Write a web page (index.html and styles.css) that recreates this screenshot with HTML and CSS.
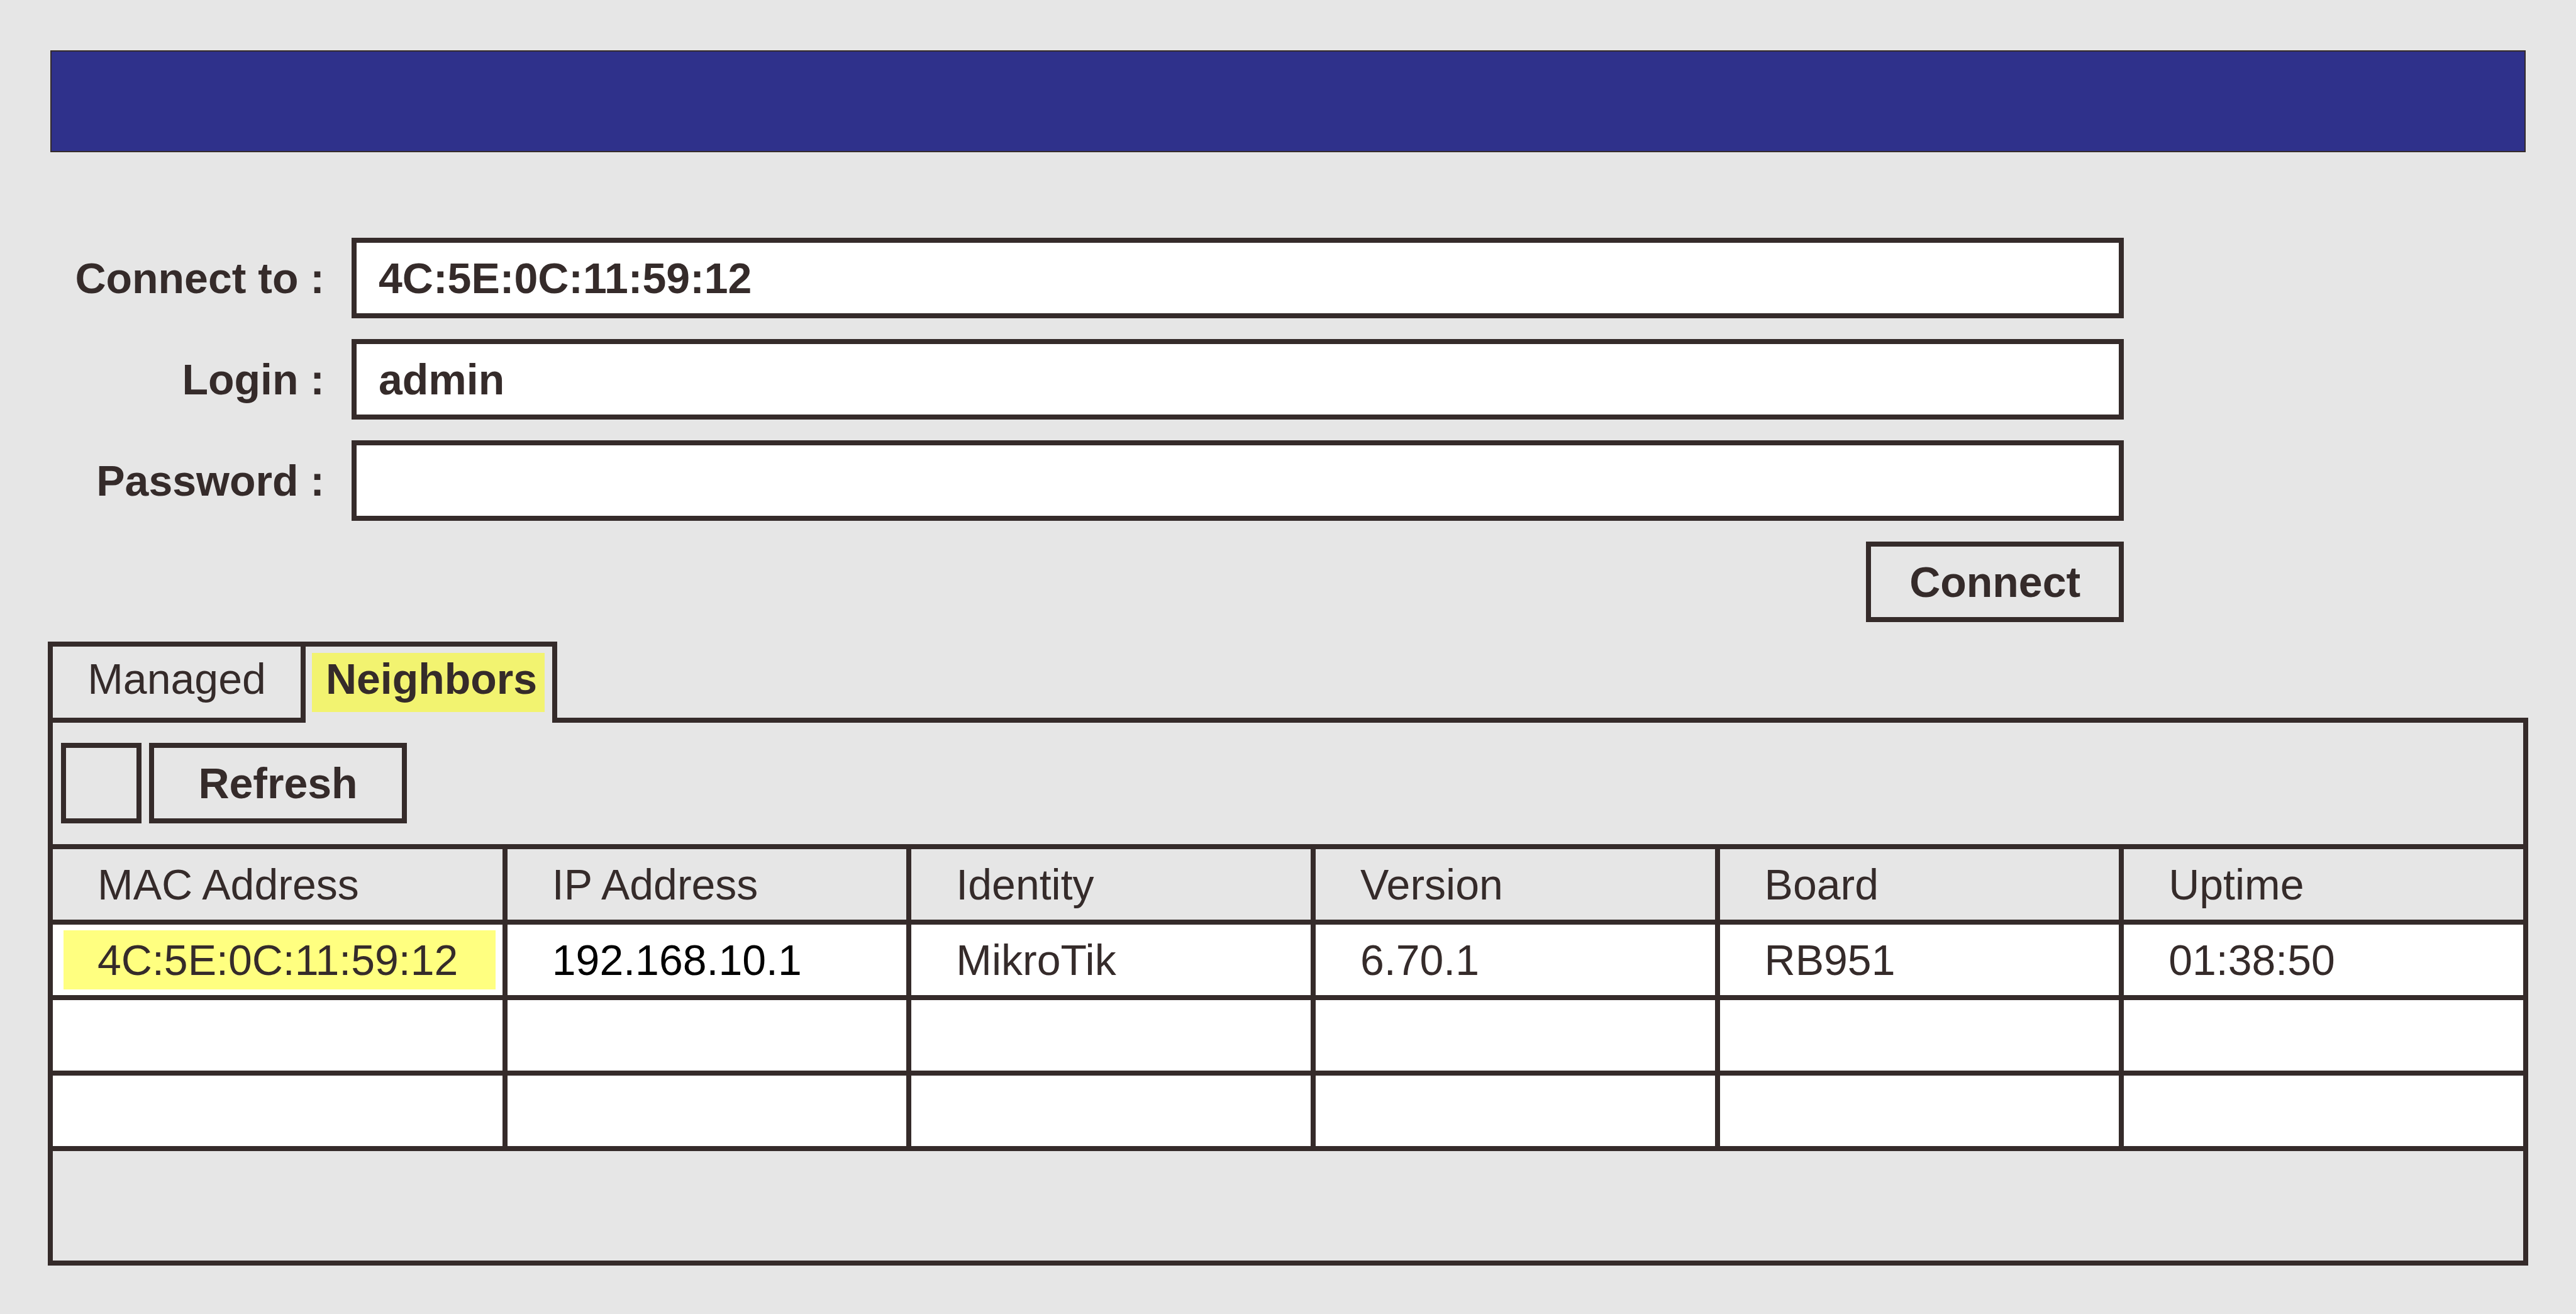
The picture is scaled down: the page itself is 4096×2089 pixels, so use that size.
FILE: index.html
```html
<!DOCTYPE html>
<html lang="en">
<head>
<meta charset="utf-8">
<title>Connect</title>
<link rel="stylesheet" href="styles.css">
</head>
<body>
<div class="window">
  <header class="title-bar"></header>

  <form class="login">
    <label class="login-label" for="address">Connect to :</label>
    <input class="login-input" id="address" type="text" value="4C:5E:0C:11:59:12">
    <label class="login-label" for="user">Login :</label>
    <input class="login-input" id="user" type="text" value="admin">
    <label class="login-label" for="password">Password :</label>
    <input class="login-input" id="password" type="password">
    <button class="button login-submit" type="button">Connect</button>
  </form>

  <div class="tabs" role="tablist">
    <button class="tab" type="button" role="tab" aria-selected="false">Managed</button>
    <button class="tab tab-active" type="button" role="tab" aria-selected="true"><span class="tab-mark">Neighbors</span></button>
    <div class="tabs-rest"></div>
  </div>

  <main class="panel">
    <div class="toolbar">
      <button class="button button-square" type="button" aria-label="Filter"></button>
      <button class="button" type="button">Refresh</button>
    </div>
    <table class="neighbors">
      <colgroup>
        <col class="col-mac"><col class="col"><col class="col"><col class="col"><col class="col"><col>
      </colgroup>
      <thead>
        <tr><th>MAC Address</th><th>IP Address</th><th>Identity</th><th>Version</th><th>Board</th><th>Uptime</th></tr>
      </thead>
      <tbody>
        <tr><td class="cell-marked"><span class="cell-mark">4C:5E:0C:11:59:12</span></td><td class="cell-ip">192.168.10.1</td><td>MikroTik</td><td>6.70.1</td><td>RB951</td><td>01:38:50</td></tr>
        <tr><td></td><td></td><td></td><td></td><td></td><td></td></tr>
        <tr><td></td><td></td><td></td><td></td><td></td><td></td></tr>
      </tbody>
    </table>
  </main>
</div>
</body>
</html>
```

FILE: styles.css
```css
:root {
  --ink: #352b2a;
  --surface: #e6e6e6;
  --line: 8px solid var(--ink);
}

* {
  box-sizing: border-box;
}

body {
  margin: 0;
  background: var(--surface);
  color: var(--ink);
  font: 68px/78px "Liberation Sans", Arial, sans-serif;
}

button,
input {
  margin: 0;
  border-radius: 0;
  color: inherit;
  font: inherit;
}

.window {
  display: flex;
  flex-direction: column;
  min-height: 100vh;
  padding: 80px 76px 77px;
}

.title-bar {
  height: 162px;
  margin: 0 4px 136px;
  border: 2px solid var(--ink);
  background: #2f318b;
}

/* Login form */
.login {
  display: grid;
  grid-template-columns: 440px 1fr;
  gap: 33px 43px;
  align-items: center;
  width: 83.7%;
  margin-bottom: 31px;
  font-weight: bold;
}

.login-label {
  text-align: right;
}

.login-input {
  width: 100%;
  height: 128px;
  padding: 0 35px;
  border: var(--line);
  background: #fff;
}

.button {
  width: 410px;
  height: 128px;
  padding: 0;
  border: var(--line);
  background: none;
  font-weight: bold;
}

.button-square {
  width: 128px;
}

.login-submit {
  grid-column: 2;
  justify-self: end;
}

/* Tabs */
.tabs {
  display: flex;
}

.tab {
  width: 402px;
  height: 129px;
  padding: 0 0 12px;
  border: var(--line);
  border-right: 0;
  background: none;
}

.tab-active {
  width: 408px;
  padding: 9px 12px 17px 10px;
  border-right: var(--line);
  border-bottom: 0;
  font-weight: bold;
}

.tab-mark {
  display: block;
  padding: 2px 0 14px 10px;
  background: #f2f370;
}

.tabs-rest {
  flex: 1;
  border-bottom: var(--line);
}

/* Neighbor list */
.panel {
  flex: 1;
  border: var(--line);
  border-top: 0;
}

.toolbar {
  display: flex;
  gap: 12px;
  padding: 32px 13px 33px;
  border-bottom: var(--line);
}

.neighbors {
  width: 100%;
  border-spacing: 0;
  table-layout: fixed;
}

.col-mac {
  width: 18.4%;
}

.col {
  width: 16.36%;
}

.neighbors th,
.neighbors td {
  height: 120px;
  padding: 0 0 0 71px;
  border-right: var(--line);
  border-bottom: var(--line);
  font-weight: normal;
  text-align: left;
}

.neighbors th:last-child,
.neighbors td:last-child {
  border-right: 0;
}

.neighbors td {
  background: #fff;
}

.neighbors .cell-marked {
  padding: 0 11px 0 17px;
}

.cell-mark {
  display: block;
  padding: 8px 0 8px 54px;
  background: #ffff80;
}

.neighbors .cell-ip {
  color: #000;
}
```
